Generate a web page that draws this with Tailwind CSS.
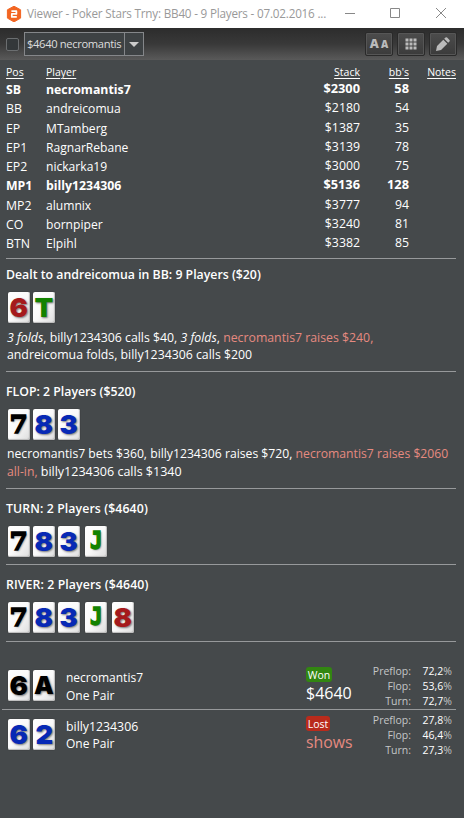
<!DOCTYPE html>
<html lang="en">
  <head>
    <meta charset="UTF-8" />
    <meta name="viewport" content="width=device-width, initial-scale=1.0" />
    <title>Viewer - Poker Stars</title>
    <script src="https://cdn.jsdelivr.net/npm/@tailwindcss/browser@4"></script>
  </head>
  <body class="bg-[#45494b] font-['Open_Sans',sans-serif] text-[12.3px] leading-[17px] text-white">
    <div class="flex h-[818px] w-[464px] flex-col overflow-hidden whitespace-nowrap">
      <!-- Title bar -->
      <header class="flex h-7 shrink-0 items-center bg-white text-[#999]">
        <svg class="ml-[6px] h-4 w-4" viewBox="0 0 16 16">
          <path d="M8 0.2 14.6 3.8V12.1L8 15.9 1.4 12.1V3.8Z" fill="#f26522" stroke="#f26522" stroke-width="1" stroke-linejoin="round" />
          <path d="M5.4 5.2H10.4V7.9H5.8V10.9H10.8" fill="none" stroke="#fff" stroke-width="1.7" stroke-linejoin="round" />
        </svg>
        <span class="ml-[5px] mt-[-2px] w-[303px] text-[11.7px] tracking-[-0.2px]">Viewer - Poker Stars Trny: BB40 - 9 Players - 07.02.2016 ...</span>
        <svg class="ml-[14px] mt-[-3px] h-3 w-[104px]" viewBox="0 0 104 12" fill="none" stroke="#888">
          <path d="M1 6.5H11M46.5 1.5H55.5V10.5H46.5ZM92 1 102 11M102 1 92 11" />
        </svg>
      </header>

      <!-- Toolbar -->
      <div class="flex h-8 shrink-0 items-center bg-linear-to-b from-[#2c2c2c] via-[#393939] to-[#5a5a5a] pl-[6px]">
        <div class="h-[13px] w-[13px] rounded-xs border border-[#6b6e70] bg-[#34383a]"></div>
        <div class="ml-[5px] flex h-6 w-[120px] border border-[#85878a] bg-[#3e4244] text-[#ddd]">
          <span class="w-[100px] shrink-0 border-r border-[#85878a] pl-[2px] text-[11.2px] leading-[22px] tracking-[-0.35px]">$4640 necromantis</span>
          <svg class="h-[22px] w-[18px] shrink-0" viewBox="0 0 18 22"><path d="M4 9H14L9 14Z" fill="#ccc" /></svg>
        </div>
        <div class="-mt-px ml-auto flex gap-1 pr-[7px]">
          <div class="flex h-6 w-7 items-baseline justify-center gap-[2px] rounded-xs border border-[#2a2a2a] bg-linear-to-b from-[#4c4c4c] to-[#3b3b3b] font-extrabold leading-[22px] text-[#bbb] shadow-[inset_0_0_0_1px_#565656]">
            <span class="text-[12.5px]">A</span><span class="text-[10px]">A</span>
          </div>
          <div class="flex h-6 w-7 items-center justify-center rounded-xs border border-[#2a2a2a] bg-linear-to-b from-[#4c4c4c] to-[#3b3b3b] shadow-[inset_0_0_0_1px_#565656]">
            <svg class="h-3 w-3" viewBox="0 0 12 12" fill="#bbb">
              <path d="M0.5 0.5h3v3h-3zM4.5 0.5h3v3h-3zM8.5 0.5h3v3h-3zM0.5 4.5h3v3h-3zM4.5 4.5h3v3h-3zM8.5 4.5h3v3h-3zM0.5 8.5h3v3h-3zM4.5 8.5h3v3h-3zM8.5 8.5h3v3h-3z" />
            </svg>
          </div>
          <div class="flex h-6 w-7 items-center justify-center rounded-xs border border-[#2a2a2a] bg-linear-to-b from-[#4c4c4c] to-[#3b3b3b] shadow-[inset_0_0_0_1px_#565656]">
            <svg class="h-4 w-4" viewBox="0 0 16 16" fill="#bbb">
              <path d="M1 15 2 10 8.3 3.7 12.3 7.7 6 14ZM9.2 2.8 10.5 1.5Q11.3 0.8 12.1 1.5L14.5 3.9Q15.2 4.7 14.5 5.5L13.2 6.8Z" />
            </svg>
          </div>
        </div>
      </div>

      <!-- Players -->
      <div id="players" class="ml-[6px] h-[199px] w-[450px] shrink-0 border-b border-[#97999b] pt-[3px]">
        <div class="grid h-[17px] grid-cols-[40px_260px_54px_49px_47px] text-[10.5px] leading-[18px] underline underline-offset-2">
          <span>Pos</span>
          <span>Player</span>
          <span class="text-right">Stack</span>
          <span class="text-right">bb's</span>
          <span class="text-right">Notes</span>
        </div>
      </div>

      <!-- Streets -->
      <section class="ml-[6px] h-[113px] w-[450px] shrink-0 border-b border-[#97999b] pt-[7px]">
        <h2 class="font-semibold">Dealt to andreicomua in BB: 9 Players ($20)</h2>
        <div class="mt-[9px] flex h-[31px] gap-[3px] pl-[2px]" data-cards="6r Tg"></div>
        <div class="mt-[6px] pl-px">
          <p><i>3 folds</i>, billy1234306 calls $40, <i>3 folds</i>, <span class="text-[#e68a80]">necromantis7 raises $240,</span></p>
          <p>andreicomua folds, billy1234306 calls $200</p>
        </div>
      </section>
      <section class="ml-[6px] h-[117px] w-[450px] shrink-0 border-b border-[#97999b] pt-[11px]">
        <h2 class="font-semibold">FLOP: 2 Players ($520)</h2>
        <div class="mt-[9px] flex h-[31px] gap-[3px] pl-[2px]" data-cards="7k 8b 3b"></div>
        <div class="mt-[5px] pl-px text-[12.2px] leading-[18px]">
          <p>necromantis7 bets $360, billy1234306 raises $720, <span class="text-[#e68a80]">necromantis7 raises $2060</span></p>
          <p><span class="text-[#e68a80]">all-in,</span> <span class="text-[12.5px]">billy1234306 calls $1340</span></p>
        </div>
      </section>
      <section class="ml-[6px] h-[76px] w-[450px] shrink-0 border-b border-[#97999b] pt-[11px]">
        <h2 class="font-semibold tracking-[0.1px]">TURN: 2 Players ($4640)</h2>
        <div class="mt-[9px] flex h-[31px] gap-[3px] pl-[2px]" data-cards="7k 8b 3b Jg"></div>
      </section>
      <section class="ml-[6px] h-[77px] w-[450px] shrink-0 border-b border-[#97999b] pt-[11px]">
        <h2 class="font-semibold tracking-[0.1px]">RIVER: 2 Players ($4640)</h2>
        <div class="mt-[9px] flex h-[31px] gap-[3px] pl-[2px]" data-cards="7k 8b 3b Jg 8r"></div>
      </section>

      <!-- Showdown -->
      <section class="ml-[2px] flex h-[68px] w-[454px] shrink-0 border-b border-[#97999b] pt-[20px]">
        <div class="mt-[8px] flex h-[31px] w-16 gap-[3px] pl-[6px]" data-cards="6k Ak"></div>
        <div class="w-60 pt-[7px] text-[12px] leading-[18px]">
          <p>necromantis7</p>
          <p>One Pair</p>
        </div>
        <div class="w-[52px] pt-[5px]">
          <div class="h-[15px] w-[26px] rounded-[3px] bg-[#328611] text-center text-[10.5px] leading-[16px]">Won</div>
          <p class="text-[16px] leading-[23px]">$4640</p>
        </div>
        <div class="ml-auto grid w-[90px] grid-cols-[auto_41px] pr-1 pt-[2px] text-right text-[10.5px] leading-[15px]">
          <span class="text-[#c4c6c7]">Preflop:</span><span>72,2<span class="text-[#c4c6c7]">%</span></span>
          <span class="text-[#c4c6c7]">Flop:</span><span>53,6<span class="text-[#c4c6c7]">%</span></span>
          <span class="text-[#c4c6c7]">Turn:</span><span>72,7<span class="text-[#c4c6c7]">%</span></span>
        </div>
      </section>
      <section class="ml-[2px] flex h-[60px] w-[454px] shrink-0">
        <div class="mt-[9px] flex h-[31px] w-16 gap-[3px] pl-[6px]" data-cards="6b 2b"></div>
        <div class="w-60 pt-[8px] text-[12px] leading-[17px]">
          <p class="text-[12.3px]">billy1234306</p>
          <p>One Pair</p>
        </div>
        <div class="w-[52px] pt-[6px]">
          <div class="h-[15px] w-6 rounded-[3px] bg-[#b92b1c] text-center text-[10.5px] leading-[16px]">Lost</div>
          <p class="text-[15.8px] leading-[23px] text-[#e68a80]">shows</p>
        </div>
        <div class="ml-auto grid h-[48px] w-[90px] grid-cols-[auto_41px] pr-1 pt-[3px] text-right text-[10.5px] leading-[15px]">
          <span class="text-[#c4c6c7]">Preflop:</span><span>27,8<span class="text-[#c4c6c7]">%</span></span>
          <span class="text-[#c4c6c7]">Flop:</span><span>46,4<span class="text-[#c4c6c7]">%</span></span>
          <span class="text-[#c4c6c7]">Turn:</span><span>27,3<span class="text-[#c4c6c7]">%</span></span>
        </div>
      </section>
    </div>

    <script>
      // position, name, stack, big blinds, still in the hand
      const players = [
        ["SB", "necromantis7", "$2300", 58, true],
        ["BB", "andreicomua", "$2180", 54],
        ["EP", "MTamberg", "$1387", 35],
        ["EP1", "RagnarRebane", "$3139", 78],
        ["EP2", "nickarka19", "$3000", 75],
        ["MP1", "billy1234306", "$5136", 128, true],
        ["MP2", "alumnix", "$3777", 94],
        ["CO", "bornpiper", "$3240", 81],
        ["BTN", "Elpihl", "$3382", 85],
      ];

      document.getElementById("players").innerHTML += players
        .map(
          ([pos, name, stack, bb, active]) => `
          <div class="grid h-[19.25px] grid-cols-[40px_260px_54px_49px] leading-[19px] ${active ? "font-bold" : ""}">
            <span>${pos}</span>
            <span class="${active ? "" : "text-[12.1px]"}">${name}</span>
            <span class="-mt-px text-right ${active ? "text-[12.8px]" : ""}">${stack}</span>
            <span class="-mt-px text-right ${active ? "text-[12.8px]" : ""}">${bb}</span>
          </div>`
        )
        .join("");

      const suits = { r: "text-[#a51a1c]", g: "text-[#128200]", b: "text-[#0729b5]", k: "text-black" };
      const faces = {
        7: "font-['DejaVu_Serif'] font-bold text-[25px] scale-x-105 [-webkit-text-stroke:1.4px_currentColor]",
        J: "font-['DejaVu_Sans_Mono'] font-bold text-[24px] scale-x-85 [-webkit-text-stroke:1.4px_currentColor]",
        A: "font-['Inter'] font-black text-[25px]",
      };
      document.querySelectorAll("[data-cards]").forEach((el) => {
        el.innerHTML = el.dataset.cards
          .split(" ")
          .map((c, i) => {
            const face = faces[c[0]] || "font-['Inter'] font-black text-[26px] scale-x-105";
            return `<div class="flex h-[31px] w-[22px] items-center justify-center rounded-[2px] bg-linear-to-br from-white via-[#fafafa] to-[#ddd] leading-[31px] shadow-[inset_-1px_-1px_1px_#bbb,0_0_1px_#222] [text-shadow:1px_1px_2px_#777] ${suits[c[1]]} ${i > 2 ? "ml-[2px]" : ""}"><span class="block ${face}">${c[0]}</span></div>`;
          })
          .join("");
      });
    </script>
  </body>
</html>
